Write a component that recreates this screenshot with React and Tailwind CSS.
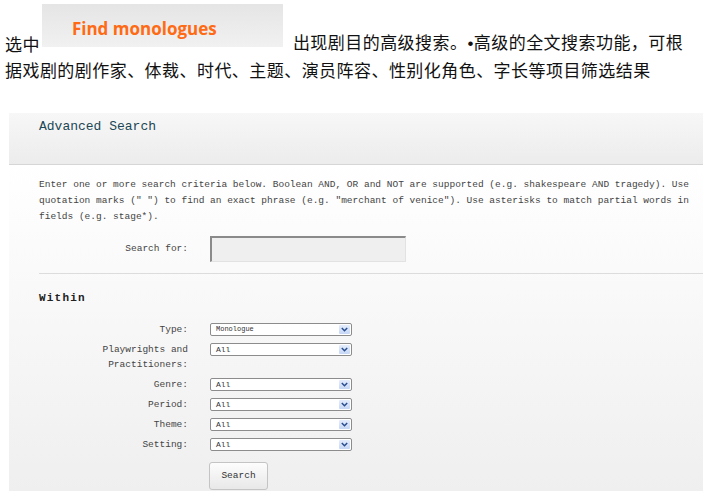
const MONO = { fontFamily: '"Liberation Mono", "DejaVu Sans Mono", monospace' }

const ROWS = [
  { label: ['Type:'], value: 'Monologue', small: true },
  { label: ['Playwrights and', 'Practitioners:'], value: 'All' },
  { label: ['Genre:'], value: 'All' },
  { label: ['Period:'], value: 'All' },
  { label: ['Theme:'], value: 'All' },
  { label: ['Setting:'], value: 'All' },
]

function FakeSelect({ value, small }) {
  return (
    <div className="mt-[1px] flex h-[13px] w-[142px] items-center rounded-[2px] border border-[#8c8c8c] bg-white pl-[5px] pr-[1px]">
      <span className={`flex-1 leading-none text-[#333] ${small ? 'text-[7px]' : 'text-[8px]'}`}>{value}</span>
      <span className="flex h-[9px] w-[11px] items-center justify-center rounded-[1px] bg-gradient-to-b from-[#e4edfc] to-[#c6d7f5]">
        <svg width="7" height="5" viewBox="0 0 7 5">
          <path d="M0.8 1 L3.5 3.7 L6.2 1" fill="none" stroke="#2a4d8f" strokeWidth="1.5" />
        </svg>
      </span>
    </div>
  )
}

export default function App() {
  return (
    <div className="relative h-[502px] w-[703px] overflow-hidden bg-white text-black">
      {/* Chinese caption with the button image inline */}
      <div style={{ fontFamily: '"Noto Sans CJK SC", "Noto Sans", sans-serif' }} className="pl-[5px] text-[17px] tracking-[0.45px] text-[#111]">
        <div className="flex h-[47px] items-end pt-[4px] whitespace-nowrap">
          <span className="mb-[-5px] leading-none">选中</span>
          <div className="ml-[2px] flex h-[43px] w-[241px] items-center bg-gradient-to-b from-[#e5e5e5] to-[#f1f1f1] pl-[30px]">
            <span style={{ fontFamily: '"Open Sans", "Liberation Sans", sans-serif' }} className="mt-[6px] text-[17px] font-bold tracking-normal text-[#ff6a14]">Find monologues</span>
          </div>
          <span className="mb-[-5px] ml-[10px] leading-none">出现剧目的高级搜索。<span style={{ fontFamily: '"Liberation Sans", sans-serif' }}>•</span>高级的全文搜索功能，可根</span>
        </div>
        <div className="mt-[14px] leading-none whitespace-nowrap">据戏剧的剧作家、体裁、时代、主题、演员阵容、性别化角色、字长等项目筛选结果</div>
      </div>

      {/* Advanced search panel */}
      <div style={MONO} className="ml-[9px] mt-[35px]">
        <div className="h-[52px] border-b border-[#d6d6d6] bg-gradient-to-b from-[#f7f7f7] to-[#ececec] pl-[30px] pt-[6px]">
          <h1 className="text-[13px] leading-[16px] text-[#1b4654]">Advanced Search</h1>
        </div>
        <div className="h-[326px] overflow-hidden bg-gradient-to-b from-[#ffffff] to-[#efefef] pt-[12px] text-[9.5px] text-[#444]">
          <p className="pl-[30px] pr-[8px] leading-[16px]">
            Enter one or more search criteria below. Boolean AND, OR and NOT are supported (e.g. shakespeare AND tragedy). Use quotation marks (" ") to find an exact phrase (e.g. "merchant of venice"). Use asterisks to match partial words in fields (e.g. stage*).
          </p>
          <div className="mt-[11px] flex items-center pl-[30px]">
            <span className="w-[149px] text-right">Search for:</span>
            <div className="ml-[22px] h-[26px] w-[196px] border-t-2 border-l-2 border-r border-b border-t-[#8a8a8a] border-l-[#8a8a8a] border-r-[#e2e2e2] border-b-[#e2e2e2] bg-[#efefef]" />
          </div>
          <div className="ml-[30px] mt-[11px] border-t border-[#dcdcdc]" />
          <h2 className="mt-[17px] pl-[30px] text-[11px] font-bold leading-[14px] tracking-[1.2px] text-[#222]">Within</h2>
          <div className="mt-[17px] flex flex-col gap-[5px] pl-[30px]">
            {ROWS.map((r, i) => (
              <div key={i} className="flex items-start">
                <div className="w-[149px] text-right leading-[15px]">
                  {r.label.map((l, j) => <div key={j}>{l}</div>)}
                </div>
                <div className="ml-[22px]">
                  <FakeSelect value={r.value} small={r.small} />
                </div>
              </div>
            ))}
          </div>
          <div className="mt-[10px] pl-[200px]">
            <button className="h-[28px] w-[59px] rounded-[3px] border border-[#c4c4c4] bg-gradient-to-b from-[#fdfdfd] to-[#e8e8e8] text-[9.5px] text-[#333]">Search</button>
          </div>
        </div>
      </div>
    </div>
  )
}
